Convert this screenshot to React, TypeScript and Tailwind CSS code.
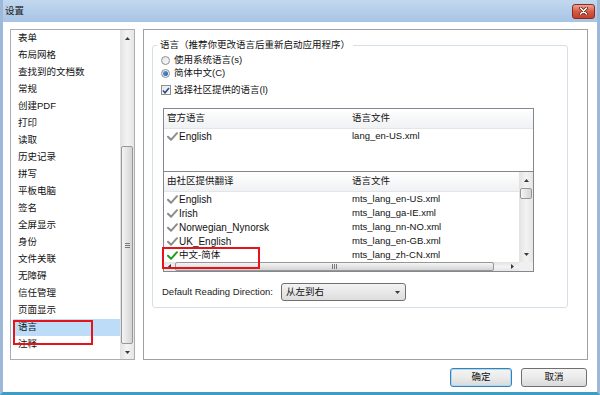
const ui = "font-['Liberation_Sans','Noto_Sans_CJK_SC',sans-serif]";

const navItems = [
  "表单",
  "布局网格",
  "查找到的文档数",
  "常规",
  "创建PDF",
  "打印",
  "读取",
  "历史记录",
  "拼写",
  "平板电脑",
  "签名",
  "全屏显示",
  "身份",
  "文件关联",
  "无障碍",
  "信任管理",
  "页面显示",
  "语言",
  "注释",
];

const community = [
  { name: "English", file: "mts_lang_en-US.xml" },
  { name: "Irish", file: "mts_lang_ga-IE.xml" },
  { name: "Norwegian_Nynorsk", file: "mts_lang_nn-NO.xml" },
  { name: "UK_English", file: "mts_lang_en-GB.xml" },
  { name: "中文-简体", file: "mts_lang_zh-CN.xml", active: true },
];

function Tri({ dir }: { dir: "up" | "down" | "left" | "right" }) {
  if (dir === "up")
    return (
      <svg width="5" height="3" viewBox="0 0 5 3">
        <polygon points="0,3 2.5,0 5,3" fill="#3a3a3a" />
      </svg>
    );
  if (dir === "down")
    return (
      <svg width="5" height="3" viewBox="0 0 5 3">
        <polygon points="0,0 5,0 2.5,3" fill="#3a3a3a" />
      </svg>
    );
  if (dir === "left")
    return (
      <svg width="3" height="5" viewBox="0 0 3 5">
        <polygon points="3,0 3,5 0,2.5" fill="#3a3a3a" />
      </svg>
    );
  return (
    <svg width="3" height="5" viewBox="0 0 3 5">
      <polygon points="0,0 0,5 3,2.5" fill="#3a3a3a" />
    </svg>
  );
}

function Check({ green }: { green?: boolean }) {
  return (
    <svg width="11" height="9" viewBox="0 0 11 9" className="shrink-0">
      <path
        d="M1 4.8 L4 7.8 L10 1.2"
        fill="none"
        stroke={green ? "#1f9e1f" : "#8c8c8c"}
        strokeWidth="2"
        strokeLinecap="round"
        strokeLinejoin="round"
      />
    </svg>
  );
}

function Grip({ horizontal }: { horizontal?: boolean }) {
  if (horizontal)
    return (
      <div className="flex h-[5px] gap-[1px]">
        <div className="h-full w-px bg-[#7a7a7a]" />
        <div className="h-full w-px bg-[#7a7a7a]" />
        <div className="h-full w-px bg-[#7a7a7a]" />
      </div>
    );
  return (
    <div className="flex w-[5px] flex-col gap-[1px]">
      <div className="h-px w-full bg-[#7a7a7a]" />
      <div className="h-px w-full bg-[#7a7a7a]" />
      <div className="h-px w-full bg-[#7a7a7a]" />
    </div>
  );
}

function Radio({ checked }: { checked?: boolean }) {
  return (
    <span className="flex h-[9px] w-[9px] shrink-0 items-center justify-center rounded-full border border-[#8e8f8f] bg-gradient-to-br from-[#e4e4e4] to-[#fbfbfb]">
      {checked ? <span className="h-[5px] w-[5px] rounded-full bg-gradient-to-br from-[#5aa0e0] to-[#1d5fa8]" /> : null}
    </span>
  );
}

function Button({ label, primary, width }: { label: string; primary?: boolean; width: string }) {
  return (
    <div
      className={`flex h-[19px] ${width} items-center justify-center rounded-[3px] border bg-gradient-to-b from-[#f4f4f4] via-[#ebebeb] to-[#d9d9d9] text-[9.5px] text-[#111] ${
        primary ? "border-[#3c7fb1] shadow-[inset_0_0_0_1px_#a6dcf7]" : "border-[#707070]"
      }`}
    >
      {label}
    </div>
  );
}

export default function App() {
  return (
    <div className={`${ui} flex h-[395px] w-[600px] flex-col border-x-[3px] border-b-[3px] border-x-[#9db8d8] border-b-[#3f9dc4] bg-white text-[#111]`}>
      <div className="flex h-[22px] shrink-0 items-center justify-between bg-gradient-to-b from-[#c2d8ef] to-[#a7c4e5] pl-[2px] pr-[2px]">
        <span className="text-[9.5px] leading-none text-[#1a1a1a]">设置</span>
        <div className="flex h-[15px] w-[23px] items-center justify-center rounded-[3px] border border-[#8b2b1f] bg-gradient-to-b from-[#eba295] via-[#d65a44] to-[#c2412c]">
          <svg width="9" height="8" viewBox="0 0 9 8">
            <path d="M1.5 1 L7.5 7 M7.5 1 L1.5 7" stroke="#5a1a10" strokeWidth="3" strokeLinecap="round" />
            <path d="M1.5 1 L7.5 7 M7.5 1 L1.5 7" stroke="#ffffff" strokeWidth="1.6" strokeLinecap="round" />
          </svg>
        </div>
      </div>

      <div className="flex flex-1 flex-col pl-[7px] pr-[9px] pt-[7px]">
        <div className="flex h-[331px] gap-[8px]">
          {/* left nav list */}
          <div className="relative flex w-[125px] border border-[#abadb3] bg-white">
            <div className="flex-1">
              {navItems.map((item) => (
                <div
                  key={item}
                  className={`ml-[2px] flex h-[17px] items-center pl-[5px] text-[9.5px] ${item === "语言" ? "bg-[#bcdcf8]" : ""}`}
                >
                  {item}
                </div>
              ))}
            </div>
            <div className="flex w-[14px] flex-col bg-gradient-to-r from-[#e2e2e2] via-[#f3f3f3] to-[#e6e6e6]">
              <div className="flex h-[16px] items-center justify-center">
                <Tri dir="up" />
              </div>
              <div className="flex-1 px-[1px] pt-[100px]">
                <div className="flex h-[198px] items-center justify-center rounded-[2px] border border-[#979797] bg-gradient-to-r from-[#f5f5f5] to-[#d4d4d4]">
                  <Grip />
                </div>
              </div>
              <div className="flex h-[14px] items-center justify-center">
                <Tri dir="down" />
              </div>
            </div>
            <div className="absolute left-[2px] top-[290px] h-[25px] w-[80px] border-2 border-[#e5141b]" />
          </div>

          {/* right panel */}
          <div className="w-[445px] border border-[#a0a0a0] bg-white pl-[8px] pr-[19px]">
            <fieldset className="mt-[8px] h-[270px] rounded-[3px] border border-[#d5dfe5]">
              <legend className="ml-[4px] px-[3px] text-[9.5px] leading-[14px]">语言（推荐你更改语言后重新启动应用程序）</legend>
              <div className="pl-[8px] pt-[1px] text-[9.5px]">
                <div className="flex h-[14px] items-center gap-[4px]">
                  <Radio />
                  <span>使用系统语言(s)</span>
                </div>
                <div className="flex h-[13px] items-center gap-[4px]">
                  <Radio checked />
                  <span>简体中文(C)</span>
                </div>
                <div className="mt-[3px] flex h-[14px] items-center gap-[3px]">
                  <span className="flex h-[10px] w-[10px] items-center justify-center border border-[#8e8f8f] bg-gradient-to-br from-[#e8e8e8] to-[#fbfbfb]">
                    <svg width="8" height="7" viewBox="0 0 8 7">
                      <path d="M1 3.5 L3 5.8 L7 1" fill="none" stroke="#2c4c8c" strokeWidth="1.6" />
                    </svg>
                  </span>
                  <span>选择社区提供的语言(l)</span>
                </div>

                {/* official languages */}
                <div className="ml-[2px] mt-[11px] h-[64px] w-[371px] border border-[#828790] bg-white">
                  <div className="flex h-[20px] items-center border-b border-[#e3e5e8] bg-gradient-to-b from-white to-[#f0f1f3]">
                    <span className="w-[185px] pl-[3px]">官方语言</span>
                    <span className="pl-[3px]">语言文件</span>
                  </div>
                  <div className="flex h-[14px] items-center">
                    <div className="flex w-[185px] items-center gap-[1px] pl-[3px]">
                      <Check />
                      <span className="text-[10px]">English</span>
                    </div>
                    <span className="pl-[3px] text-[9.5px]">lang_en-US.xml</span>
                  </div>
                </div>

                {/* community translations */}
                <div className="relative ml-[2px] w-[371px] border-x border-b border-[#828790] bg-white">
                  <div className="flex h-[90px]">
                    <div className="flex-1">
                      <div className="flex h-[20px] items-center border-b border-[#e3e5e8] bg-gradient-to-b from-white to-[#f0f1f3]">
                        <span className="w-[185px] pl-[3px]">由社区提供翻译</span>
                        <span className="pl-[3px]">语言文件</span>
                      </div>
                      {community.map((row) => (
                        <div key={row.file} className="flex h-[14px] items-center">
                          <div className="flex w-[185px] items-center gap-[1px] pl-[3px]">
                            <Check green={row.active} />
                            <span className={row.active ? "text-[9.5px]" : "text-[10px]"}>{row.name}</span>
                          </div>
                          <span className="pl-[3px] text-[9.5px]">{row.file}</span>
                        </div>
                      ))}
                    </div>
                    <div className="flex w-[14px] flex-col bg-gradient-to-r from-[#e2e2e2] via-[#f3f3f3] to-[#e6e6e6]">
                      <div className="flex h-[16px] items-center justify-center">
                        <Tri dir="up" />
                      </div>
                      <div className="flex-1 px-[1px]">
                        <div className="h-[11px] rounded-[2px] border border-[#979797] bg-gradient-to-r from-[#f5f5f5] to-[#d4d4d4]" />
                      </div>
                      <div className="flex h-[16px] items-center justify-center">
                        <Tri dir="down" />
                      </div>
                    </div>
                  </div>
                  <div className="flex h-[9px]">
                    <div className="flex flex-1 bg-gradient-to-b from-[#e2e2e2] via-[#f3f3f3] to-[#e6e6e6]">
                      <div className="flex w-[11px] items-center justify-center">
                        <Tri dir="left" />
                      </div>
                      <div className="flex w-[319px] items-center justify-center rounded-[2px] border border-[#979797] bg-gradient-to-b from-[#f5f5f5] to-[#d4d4d4]">
                        <Grip horizontal />
                      </div>
                      <div className="flex flex-1 items-center justify-end pr-[5px]">
                        <Tri dir="right" />
                      </div>
                    </div>
                    <div className="w-[14px] bg-[#f0f0f0]" />
                  </div>
                  <div className="absolute left-[-2px] top-[75px] h-[22px] w-[98px] border-2 border-[#e5141b]" />
                </div>

                <div className="mt-[11px] flex h-[18px] items-center">
                  <span className="w-[120px] pl-[1px] text-[9.5px] text-[#222]">Default Reading Direction:</span>
                  <div className="flex h-[18px] w-[125px] items-center justify-between rounded-[3px] border border-[#707070] bg-gradient-to-b from-[#f3f3f3] to-[#dddddd] pl-[4px] pr-[5px]">
                    <span>从左到右</span>
                    <Tri dir="down" />
                  </div>
                </div>
              </div>
            </fieldset>
          </div>
        </div>

        <div className="mt-[8px] flex justify-end gap-[9px] pr-[1px]">
          <Button label="确定" primary width="w-[62px]" />
          <Button label="取消" width="w-[66px]" />
        </div>
      </div>
    </div>
  );
}
